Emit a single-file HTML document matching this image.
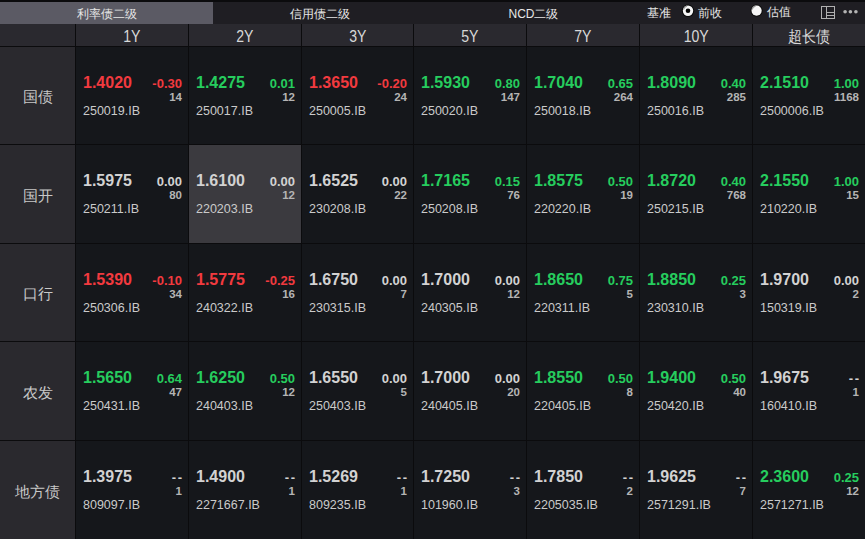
<!DOCTYPE html><html><head><meta charset="utf-8"><style>
*{margin:0;padding:0;box-sizing:border-box}
html,body{width:865px;height:539px;overflow:hidden;background:#0b0b0d;font-family:"Liberation Sans",sans-serif}
.a{position:absolute;white-space:nowrap}
.tab{position:absolute;top:2px;height:22px;font-size:12px;color:#e6e6e6;line-height:25px;text-align:center}
.hd{position:absolute;top:24px;height:22px;background:#2a292f;color:#d8d8d8;font-size:16px;line-height:26px;text-align:center}
.hd span{display:inline-block;transform:scaleX(0.88)}
.lb{position:absolute;left:0;width:75px;background:#2a292e;color:#c8c8c8;font-size:15px;text-align:center}
.cell{position:absolute;background:#15171b}
.pr{position:absolute;font-weight:bold;line-height:1}
.ch{position:absolute;font-weight:bold;line-height:1;text-align:right}
.ct{position:absolute;font-weight:bold;line-height:1;color:#b4b4b4;text-align:right}
.cd{position:absolute;line-height:1;color:#cacaca}
</style></head><body>
<div class="a" style="left:0;top:2px;width:865px;height:22px;background:#1f1e23"></div>
<div class="tab" style="left:0;width:213px;background:#5b5a64">利率债二级</div>
<div class="tab" style="left:213px;width:214px">信用债二级</div>
<div class="tab" style="left:427px;width:213px">NCD二级</div>
<div class="a" style="left:647px;top:2px;height:22px;line-height:23px;font-size:12px;color:#e6e6e6">基准</div>
<svg class="a" style="left:680px;top:3px" width="16" height="16"><circle cx="8" cy="7.8" r="6.2" fill="#0a0a0a"/><circle cx="8" cy="7.8" r="5.2" fill="#f6f6f6"/><path d="M3.4 6.5 A5 5 0 0 1 7 2.8" stroke="#9a9a9a" stroke-width="1.2" fill="none"/><circle cx="8" cy="7.8" r="2.3" fill="#050505"/></svg>
<div class="a" style="left:698px;top:2px;height:22px;line-height:23px;font-size:12px;color:#e6e6e6">前收</div>
<svg class="a" style="left:749px;top:3px" width="16" height="16"><circle cx="7.6" cy="7.7" r="6.1" fill="#0a0a0a"/><circle cx="7.6" cy="7.7" r="5.1" fill="#f6f6f6"/><path d="M3.0 6.5 A5 5 0 0 1 6.6 2.8" stroke="#9a9a9a" stroke-width="1.2" fill="none"/></svg>
<div class="a" style="left:767px;top:1px;height:22px;line-height:23px;font-size:12px;color:#e6e6e6">估值</div>
<svg class="a" style="left:821px;top:5px" width="15" height="15" shape-rendering="crispEdges"><rect x="0.5" y="1.5" width="13" height="12" fill="none" stroke="#b0b0b0" stroke-width="1"/><line x1="5.5" y1="1.5" x2="5.5" y2="13.5" stroke="#b0b0b0" stroke-width="1"/><line x1="6" y1="7.5" x2="13" y2="7.5" stroke="#b0b0b0" stroke-width="1"/><line x1="6" y1="10.5" x2="13" y2="10.5" stroke="#b0b0b0" stroke-width="1"/></svg>
<svg class="a" style="left:840px;top:6px" width="20" height="12"><circle cx="5.1" cy="5.7" r="1.8" fill="#b4b4b4"/><circle cx="10.4" cy="5.7" r="1.8" fill="#b4b4b4"/><circle cx="15.9" cy="5.7" r="1.8" fill="#b4b4b4"/></svg>
<div class="hd" style="left:0;width:75px"></div>
<div class="hd" style="left:76px;width:112px"><span>1Y</span></div>
<div class="hd" style="left:189px;width:112px"><span>2Y</span></div>
<div class="hd" style="left:302px;width:111px"><span>3Y</span></div>
<div class="hd" style="left:414px;width:112px"><span>5Y</span></div>
<div class="hd" style="left:527px;width:112px"><span>7Y</span></div>
<div class="hd" style="left:640px;width:112px"><span>10Y</span></div>
<div class="hd" style="left:753px;width:112px"><span>超长债</span></div>
<div class="lb" style="top:47px;height:97px;line-height:100px">国债</div>
<div class="cell" style="left:76px;top:47px;width:112px;height:97px;background:#15171b">
<div class="pr" style="left:7px;top:28px;font-size:16px;color:#f23a3f">1.4020</div>
<div class="ch" style="right:6px;top:30px;font-size:13px;color:#f23a3f">-0.30</div>
<div class="ct" style="right:6px;top:45px;font-size:11.5px">14</div>
<div class="cd" style="left:7px;top:58px;font-size:12.5px">250019.IB</div>
</div>
<div class="cell" style="left:189px;top:47px;width:112px;height:97px;background:#15171b">
<div class="pr" style="left:7px;top:28px;font-size:16px;color:#26cd5e">1.4275</div>
<div class="ch" style="right:6px;top:30px;font-size:13px;color:#26cd5e">0.01</div>
<div class="ct" style="right:6px;top:45px;font-size:11.5px">12</div>
<div class="cd" style="left:7px;top:58px;font-size:12.5px">250017.IB</div>
</div>
<div class="cell" style="left:302px;top:47px;width:111px;height:97px;background:#15171b">
<div class="pr" style="left:7px;top:28px;font-size:16px;color:#f23a3f">1.3650</div>
<div class="ch" style="right:6px;top:30px;font-size:13px;color:#f23a3f">-0.20</div>
<div class="ct" style="right:6px;top:45px;font-size:11.5px">24</div>
<div class="cd" style="left:7px;top:58px;font-size:12.5px">250005.IB</div>
</div>
<div class="cell" style="left:414px;top:47px;width:112px;height:97px;background:#15171b">
<div class="pr" style="left:7px;top:28px;font-size:16px;color:#26cd5e">1.5930</div>
<div class="ch" style="right:6px;top:30px;font-size:13px;color:#26cd5e">0.80</div>
<div class="ct" style="right:6px;top:45px;font-size:11.5px">147</div>
<div class="cd" style="left:7px;top:58px;font-size:12.5px">250020.IB</div>
</div>
<div class="cell" style="left:527px;top:47px;width:112px;height:97px;background:#15171b">
<div class="pr" style="left:7px;top:28px;font-size:16px;color:#26cd5e">1.7040</div>
<div class="ch" style="right:6px;top:30px;font-size:13px;color:#26cd5e">0.65</div>
<div class="ct" style="right:6px;top:45px;font-size:11.5px">264</div>
<div class="cd" style="left:7px;top:58px;font-size:12.5px">250018.IB</div>
</div>
<div class="cell" style="left:640px;top:47px;width:112px;height:97px;background:#15171b">
<div class="pr" style="left:7px;top:28px;font-size:16px;color:#26cd5e">1.8090</div>
<div class="ch" style="right:6px;top:30px;font-size:13px;color:#26cd5e">0.40</div>
<div class="ct" style="right:6px;top:45px;font-size:11.5px">285</div>
<div class="cd" style="left:7px;top:58px;font-size:12.5px">250016.IB</div>
</div>
<div class="cell" style="left:753px;top:47px;width:112px;height:97px;background:#15171b">
<div class="pr" style="left:7px;top:28px;font-size:16px;color:#26cd5e">2.1510</div>
<div class="ch" style="right:6px;top:30px;font-size:13px;color:#26cd5e">1.00</div>
<div class="ct" style="right:6px;top:45px;font-size:11.5px">1168</div>
<div class="cd" style="left:7px;top:58px;font-size:12.5px">2500006.IB</div>
</div>
<div class="lb" style="top:145px;height:98px;line-height:101px">国开</div>
<div class="cell" style="left:76px;top:145px;width:112px;height:98px;background:#15171b">
<div class="pr" style="left:7px;top:28px;font-size:16px;color:#d2d2d2">1.5975</div>
<div class="ch" style="right:6px;top:30px;font-size:13px;color:#d2d2d2">0.00</div>
<div class="ct" style="right:6px;top:45px;font-size:11.5px">80</div>
<div class="cd" style="left:7px;top:58px;font-size:12.5px">250211.IB</div>
</div>
<div class="cell" style="left:189px;top:145px;width:112px;height:98px;background:#3b3a3f">
<div class="pr" style="left:7px;top:28px;font-size:16px;color:#d2d2d2">1.6100</div>
<div class="ch" style="right:6px;top:30px;font-size:13px;color:#d2d2d2">0.00</div>
<div class="ct" style="right:6px;top:45px;font-size:11.5px">12</div>
<div class="cd" style="left:7px;top:58px;font-size:12.5px">220203.IB</div>
</div>
<div class="cell" style="left:302px;top:145px;width:111px;height:98px;background:#15171b">
<div class="pr" style="left:7px;top:28px;font-size:16px;color:#d2d2d2">1.6525</div>
<div class="ch" style="right:6px;top:30px;font-size:13px;color:#d2d2d2">0.00</div>
<div class="ct" style="right:6px;top:45px;font-size:11.5px">22</div>
<div class="cd" style="left:7px;top:58px;font-size:12.5px">230208.IB</div>
</div>
<div class="cell" style="left:414px;top:145px;width:112px;height:98px;background:#15171b">
<div class="pr" style="left:7px;top:28px;font-size:16px;color:#26cd5e">1.7165</div>
<div class="ch" style="right:6px;top:30px;font-size:13px;color:#26cd5e">0.15</div>
<div class="ct" style="right:6px;top:45px;font-size:11.5px">76</div>
<div class="cd" style="left:7px;top:58px;font-size:12.5px">250208.IB</div>
</div>
<div class="cell" style="left:527px;top:145px;width:112px;height:98px;background:#15171b">
<div class="pr" style="left:7px;top:28px;font-size:16px;color:#26cd5e">1.8575</div>
<div class="ch" style="right:6px;top:30px;font-size:13px;color:#26cd5e">0.50</div>
<div class="ct" style="right:6px;top:45px;font-size:11.5px">19</div>
<div class="cd" style="left:7px;top:58px;font-size:12.5px">220220.IB</div>
</div>
<div class="cell" style="left:640px;top:145px;width:112px;height:98px;background:#15171b">
<div class="pr" style="left:7px;top:28px;font-size:16px;color:#26cd5e">1.8720</div>
<div class="ch" style="right:6px;top:30px;font-size:13px;color:#26cd5e">0.40</div>
<div class="ct" style="right:6px;top:45px;font-size:11.5px">768</div>
<div class="cd" style="left:7px;top:58px;font-size:12.5px">250215.IB</div>
</div>
<div class="cell" style="left:753px;top:145px;width:112px;height:98px;background:#15171b">
<div class="pr" style="left:7px;top:28px;font-size:16px;color:#26cd5e">2.1550</div>
<div class="ch" style="right:6px;top:30px;font-size:13px;color:#26cd5e">1.00</div>
<div class="ct" style="right:6px;top:45px;font-size:11.5px">15</div>
<div class="cd" style="left:7px;top:58px;font-size:12.5px">210220.IB</div>
</div>
<div class="lb" style="top:244px;height:97px;line-height:100px">口行</div>
<div class="cell" style="left:76px;top:244px;width:112px;height:97px;background:#15171b">
<div class="pr" style="left:7px;top:28px;font-size:16px;color:#f23a3f">1.5390</div>
<div class="ch" style="right:6px;top:30px;font-size:13px;color:#f23a3f">-0.10</div>
<div class="ct" style="right:6px;top:45px;font-size:11.5px">34</div>
<div class="cd" style="left:7px;top:58px;font-size:12.5px">250306.IB</div>
</div>
<div class="cell" style="left:189px;top:244px;width:112px;height:97px;background:#15171b">
<div class="pr" style="left:7px;top:28px;font-size:16px;color:#f23a3f">1.5775</div>
<div class="ch" style="right:6px;top:30px;font-size:13px;color:#f23a3f">-0.25</div>
<div class="ct" style="right:6px;top:45px;font-size:11.5px">16</div>
<div class="cd" style="left:7px;top:58px;font-size:12.5px">240322.IB</div>
</div>
<div class="cell" style="left:302px;top:244px;width:111px;height:97px;background:#15171b">
<div class="pr" style="left:7px;top:28px;font-size:16px;color:#d2d2d2">1.6750</div>
<div class="ch" style="right:6px;top:30px;font-size:13px;color:#d2d2d2">0.00</div>
<div class="ct" style="right:6px;top:45px;font-size:11.5px">7</div>
<div class="cd" style="left:7px;top:58px;font-size:12.5px">230315.IB</div>
</div>
<div class="cell" style="left:414px;top:244px;width:112px;height:97px;background:#15171b">
<div class="pr" style="left:7px;top:28px;font-size:16px;color:#d2d2d2">1.7000</div>
<div class="ch" style="right:6px;top:30px;font-size:13px;color:#d2d2d2">0.00</div>
<div class="ct" style="right:6px;top:45px;font-size:11.5px">12</div>
<div class="cd" style="left:7px;top:58px;font-size:12.5px">240305.IB</div>
</div>
<div class="cell" style="left:527px;top:244px;width:112px;height:97px;background:#15171b">
<div class="pr" style="left:7px;top:28px;font-size:16px;color:#26cd5e">1.8650</div>
<div class="ch" style="right:6px;top:30px;font-size:13px;color:#26cd5e">0.75</div>
<div class="ct" style="right:6px;top:45px;font-size:11.5px">5</div>
<div class="cd" style="left:7px;top:58px;font-size:12.5px">220311.IB</div>
</div>
<div class="cell" style="left:640px;top:244px;width:112px;height:97px;background:#15171b">
<div class="pr" style="left:7px;top:28px;font-size:16px;color:#26cd5e">1.8850</div>
<div class="ch" style="right:6px;top:30px;font-size:13px;color:#26cd5e">0.25</div>
<div class="ct" style="right:6px;top:45px;font-size:11.5px">3</div>
<div class="cd" style="left:7px;top:58px;font-size:12.5px">230310.IB</div>
</div>
<div class="cell" style="left:753px;top:244px;width:112px;height:97px;background:#15171b">
<div class="pr" style="left:7px;top:28px;font-size:16px;color:#d2d2d2">1.9700</div>
<div class="ch" style="right:6px;top:30px;font-size:13px;color:#d2d2d2">0.00</div>
<div class="ct" style="right:6px;top:45px;font-size:11.5px">2</div>
<div class="cd" style="left:7px;top:58px;font-size:12.5px">150319.IB</div>
</div>
<div class="lb" style="top:342px;height:98px;line-height:101px">农发</div>
<div class="cell" style="left:76px;top:342px;width:112px;height:98px;background:#15171b">
<div class="pr" style="left:7px;top:28px;font-size:16px;color:#26cd5e">1.5650</div>
<div class="ch" style="right:6px;top:30px;font-size:13px;color:#26cd5e">0.64</div>
<div class="ct" style="right:6px;top:45px;font-size:11.5px">47</div>
<div class="cd" style="left:7px;top:58px;font-size:12.5px">250431.IB</div>
</div>
<div class="cell" style="left:189px;top:342px;width:112px;height:98px;background:#15171b">
<div class="pr" style="left:7px;top:28px;font-size:16px;color:#26cd5e">1.6250</div>
<div class="ch" style="right:6px;top:30px;font-size:13px;color:#26cd5e">0.50</div>
<div class="ct" style="right:6px;top:45px;font-size:11.5px">12</div>
<div class="cd" style="left:7px;top:58px;font-size:12.5px">240403.IB</div>
</div>
<div class="cell" style="left:302px;top:342px;width:111px;height:98px;background:#15171b">
<div class="pr" style="left:7px;top:28px;font-size:16px;color:#d2d2d2">1.6550</div>
<div class="ch" style="right:6px;top:30px;font-size:13px;color:#d2d2d2">0.00</div>
<div class="ct" style="right:6px;top:45px;font-size:11.5px">5</div>
<div class="cd" style="left:7px;top:58px;font-size:12.5px">250403.IB</div>
</div>
<div class="cell" style="left:414px;top:342px;width:112px;height:98px;background:#15171b">
<div class="pr" style="left:7px;top:28px;font-size:16px;color:#d2d2d2">1.7000</div>
<div class="ch" style="right:6px;top:30px;font-size:13px;color:#d2d2d2">0.00</div>
<div class="ct" style="right:6px;top:45px;font-size:11.5px">20</div>
<div class="cd" style="left:7px;top:58px;font-size:12.5px">240405.IB</div>
</div>
<div class="cell" style="left:527px;top:342px;width:112px;height:98px;background:#15171b">
<div class="pr" style="left:7px;top:28px;font-size:16px;color:#26cd5e">1.8550</div>
<div class="ch" style="right:6px;top:30px;font-size:13px;color:#26cd5e">0.50</div>
<div class="ct" style="right:6px;top:45px;font-size:11.5px">8</div>
<div class="cd" style="left:7px;top:58px;font-size:12.5px">220405.IB</div>
</div>
<div class="cell" style="left:640px;top:342px;width:112px;height:98px;background:#15171b">
<div class="pr" style="left:7px;top:28px;font-size:16px;color:#26cd5e">1.9400</div>
<div class="ch" style="right:6px;top:30px;font-size:13px;color:#26cd5e">0.50</div>
<div class="ct" style="right:6px;top:45px;font-size:11.5px">40</div>
<div class="cd" style="left:7px;top:58px;font-size:12.5px">250420.IB</div>
</div>
<div class="cell" style="left:753px;top:342px;width:112px;height:98px;background:#15171b">
<div class="pr" style="left:7px;top:28px;font-size:16px;color:#d2d2d2">1.9675</div>
<div class="ch" style="right:6px;top:30px;font-size:13px;color:#d2d2d2;letter-spacing:1.5px;margin-right:-1.5px">--</div>
<div class="ct" style="right:6px;top:45px;font-size:11.5px">1</div>
<div class="cd" style="left:7px;top:58px;font-size:12.5px">160410.IB</div>
</div>
<div class="lb" style="top:441px;height:98px;line-height:101px">地方债</div>
<div class="cell" style="left:76px;top:441px;width:112px;height:98px;background:#15171b">
<div class="pr" style="left:7px;top:28px;font-size:16px;color:#d2d2d2">1.3975</div>
<div class="ch" style="right:6px;top:30px;font-size:13px;color:#d2d2d2;letter-spacing:1.5px;margin-right:-1.5px">--</div>
<div class="ct" style="right:6px;top:45px;font-size:11.5px">1</div>
<div class="cd" style="left:7px;top:58px;font-size:12.5px">809097.IB</div>
</div>
<div class="cell" style="left:189px;top:441px;width:112px;height:98px;background:#15171b">
<div class="pr" style="left:7px;top:28px;font-size:16px;color:#d2d2d2">1.4900</div>
<div class="ch" style="right:6px;top:30px;font-size:13px;color:#d2d2d2;letter-spacing:1.5px;margin-right:-1.5px">--</div>
<div class="ct" style="right:6px;top:45px;font-size:11.5px">1</div>
<div class="cd" style="left:7px;top:58px;font-size:12.5px">2271667.IB</div>
</div>
<div class="cell" style="left:302px;top:441px;width:111px;height:98px;background:#15171b">
<div class="pr" style="left:7px;top:28px;font-size:16px;color:#d2d2d2">1.5269</div>
<div class="ch" style="right:6px;top:30px;font-size:13px;color:#d2d2d2;letter-spacing:1.5px;margin-right:-1.5px">--</div>
<div class="ct" style="right:6px;top:45px;font-size:11.5px">1</div>
<div class="cd" style="left:7px;top:58px;font-size:12.5px">809235.IB</div>
</div>
<div class="cell" style="left:414px;top:441px;width:112px;height:98px;background:#15171b">
<div class="pr" style="left:7px;top:28px;font-size:16px;color:#d2d2d2">1.7250</div>
<div class="ch" style="right:6px;top:30px;font-size:13px;color:#d2d2d2;letter-spacing:1.5px;margin-right:-1.5px">--</div>
<div class="ct" style="right:6px;top:45px;font-size:11.5px">3</div>
<div class="cd" style="left:7px;top:58px;font-size:12.5px">101960.IB</div>
</div>
<div class="cell" style="left:527px;top:441px;width:112px;height:98px;background:#15171b">
<div class="pr" style="left:7px;top:28px;font-size:16px;color:#d2d2d2">1.7850</div>
<div class="ch" style="right:6px;top:30px;font-size:13px;color:#d2d2d2;letter-spacing:1.5px;margin-right:-1.5px">--</div>
<div class="ct" style="right:6px;top:45px;font-size:11.5px">2</div>
<div class="cd" style="left:7px;top:58px;font-size:12.5px">2205035.IB</div>
</div>
<div class="cell" style="left:640px;top:441px;width:112px;height:98px;background:#15171b">
<div class="pr" style="left:7px;top:28px;font-size:16px;color:#d2d2d2">1.9625</div>
<div class="ch" style="right:6px;top:30px;font-size:13px;color:#d2d2d2;letter-spacing:1.5px;margin-right:-1.5px">--</div>
<div class="ct" style="right:6px;top:45px;font-size:11.5px">7</div>
<div class="cd" style="left:7px;top:58px;font-size:12.5px">2571291.IB</div>
</div>
<div class="cell" style="left:753px;top:441px;width:112px;height:98px;background:#15171b">
<div class="pr" style="left:7px;top:28px;font-size:16px;color:#26cd5e">2.3600</div>
<div class="ch" style="right:6px;top:30px;font-size:13px;color:#26cd5e">0.25</div>
<div class="ct" style="right:6px;top:45px;font-size:11.5px">12</div>
<div class="cd" style="left:7px;top:58px;font-size:12.5px">2571271.IB</div>
</div>
</body></html>
